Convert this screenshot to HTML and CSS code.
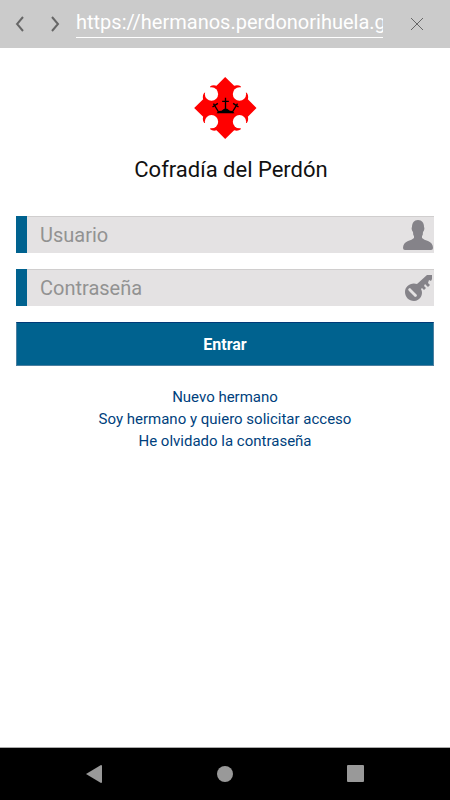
FILE: index.html
```
<!DOCTYPE html>
<html lang="es">
<head>
    <meta charset="UTF-8">
    <meta name="viewport" content="width=device-width, initial-scale=1.0">
    <title>Cofradía del Perdón</title>
    <link rel="stylesheet" href="styles.css">
</head>
<body>
    <header class="browser-bar">
        <button type="button" class="bar-button" aria-label="Atrás">
            <svg width="10" height="16" viewBox="0 0 10 16"><path d="M8 1 L2 8 L8 15"/></svg>
        </button>
        <button type="button" class="bar-button" aria-label="Adelante">
            <svg width="10" height="16" viewBox="0 0 10 16"><path d="M2 1 L8 8 L2 15"/></svg>
        </button>
        <input type="text" class="url" aria-label="Dirección" value="https://hermanos.perdonorihuela.ghermandad.com">
        <button type="button" class="bar-button close" aria-label="Cerrar">
            <svg width="14" height="14" viewBox="0 0 14 14"><path d="M1 1 L13 13 M13 1 L1 13"/></svg>
        </button>
    </header>

    <main class="container">
        <svg class="logo" viewBox="26 22 188 186" aria-hidden="true">
            <path fill="#f00" d="M119 22 L146 48 Q158 45 166 50 Q161 73 184 69 Q190 78 187 89 L213 115 L187 141 Q190 152 184 160 Q161 155 166 179 Q158 185 146 182 L119 208 L93 182 Q82 185 74 179 Q79 155 56 160 Q50 152 53 141 L26 115 L53 89 Q50 78 56 69 Q79 73 74 50 Q82 45 93 48 Z"/>
            <g fill="#fff">
                <circle cx="78" cy="73" r="20"/>
                <circle cx="162" cy="73" r="20"/>
                <circle cx="78" cy="156" r="20"/>
                <circle cx="162" cy="156" r="20"/>
            </g>
            <path fill="none" stroke="#000" stroke-width="4" d="M120 84 V122 M110 95 H130 M84 102 L101 130 M81 112 L97 101 M156 102 L139 130 M143 101 L159 112"/>
            <path d="M93 131 L99 124 L108 123 L116 117 L125 117 L133 123 L141 124 L147 131 Z"/>
        </svg>
        <h1>Cofradía del Perdón</h1>

        <form class="login">
            <div class="field">
                <input type="text" id="usuario" placeholder="Usuario" aria-label="Usuario">
                <svg width="30" height="30" viewBox="0 0 30 30" aria-hidden="true">
                    <path d="M15 0 C19 0 21 3 21 7 C22 8 21 11 20 12 Q20 15 19 16 V18 Q21 20 25 21 Q30 23 30 28 Q30 30 28 30 H2 Q0 30 0 28 Q0 23 5 21 Q9 20 11 18 V16 Q10 15 10 12 C9 11 8 8 9 7 C9 3 11 0 15 0 Z"/>
                </svg>
            </div>
            <div class="field">
                <input type="password" id="contrasena" placeholder="Contraseña" aria-label="Contraseña">
                <svg width="30" height="30" viewBox="0 0 30 30" aria-hidden="true">
                    <path fill-rule="evenodd" d="M24 2 L29 2 V6 L28 8 L26 7 L25 10 L27 12 L25 14 L22 11 L21 13 L23 15 L21 17 L19 15 L18 16 C21 21 17 28 11 28 C6 28 2 24 2 19 C2 13 8 9 14 11 Z M7 15 Q4 16 6 18 L12 24 Q14 24 14 22 Z"/>
                </svg>
            </div>
            <button type="submit" class="submit">Entrar</button>
        </form>

        <nav class="links">
            <a href="#nuevo">Nuevo hermano</a>
            <a href="#acceso">Soy hermano y quiero solicitar acceso</a>
            <a href="#olvido">He olvidado la contraseña</a>
        </nav>
    </main>

    <footer class="system-bar">
        <button type="button" aria-label="Volver">
            <svg width="18" height="18" viewBox="0 0 18 18"><path d="M0 9 L15 0 Q16 0 16 1 V17 Q16 18 15 18 Z"/></svg>
        </button>
        <button type="button" aria-label="Inicio">
            <svg width="18" height="18" viewBox="0 0 18 18"><circle cx="9" cy="9" r="8"/></svg>
        </button>
        <button type="button" aria-label="Recientes">
            <svg width="18" height="18" viewBox="0 0 18 18"><rect x="0" y="0" width="17" height="17" rx="1"/></svg>
        </button>
    </footer>
</body>
</html>
```
FILE: styles.css
```
* {
    box-sizing: border-box;
}

body {
    font-family: Roboto, Arial, sans-serif;
    background-color: #fff;
    color: #111;
    margin: 0;
    min-height: 100vh;
    display: flex;
    flex-direction: column;
}

button {
    font-family: inherit;
    border: none;
    padding: 0;
    cursor: pointer;
}

svg {
    display: block;
}

.browser-bar {
    display: flex;
    align-items: center;
    height: 48px;
    padding: 0 16px 0 2px;
    background-color: #cbcbcb;
}

.bar-button {
    display: flex;
    justify-content: center;
    width: 35px;
    background: none;
}

.bar-button path {
    fill: none;
    stroke: #666;
    stroke-width: 2;
}

.close {
    margin-left: 16px;
}

.bar-button.close path {
    stroke-width: 1;
}

.url {
    flex: 1;
    min-width: 0;
    height: 28px;
    margin-left: 4px;
    padding: 0 0 4px;
    border: none;
    border-bottom: 1px solid #fff;
    background: none;
    color: #fff;
    font-family: inherit;
    font-size: 20px;
    outline: none;
}

.container {
    flex: 1;
    padding: 29px 16px;
}

.logo {
    width: 63px;
    height: 62px;
    margin: 0 auto;
}

h1 {
    margin: 16px 0 32px;
    padding-left: 12px;
    font-size: 22px;
    font-weight: 400;
    line-height: 29px;
    text-align: center;
}

.login {
    display: flex;
    flex-direction: column;
    gap: 16px;
}

.field {
    display: flex;
    align-items: center;
    height: 37px;
    border-left: 11px solid #00628f;
    background-color: #e4e2e3;
    box-shadow: inset 0 1px #d0cece;
}

.field input {
    flex: 1;
    min-width: 0;
    padding: 0 13px;
    border: none;
    background: none;
    font-family: inherit;
    font-size: 20px;
    outline: none;
}

.field input::placeholder {
    color: #929292;
}

.field svg {
    margin-right: 1px;
    fill: #858389;
}

.submit {
    height: 44px;
    border: 1px solid #4b7fa0;
    border-top-color: #003a78;
    background-color: #00628f;
    color: #fff;
    font-size: 16px;
    font-weight: 700;
}

.links {
    display: flex;
    flex-direction: column;
    align-items: center;
    margin-top: 20px;
}

.links a {
    color: #003f7d;
    font-size: 15px;
    line-height: 22px;
    text-decoration: none;
}

.system-bar {
    display: flex;
    align-items: center;
    justify-content: center;
    height: 53px;
    border-top: 1px solid #aaa;
    background-color: #000;
}

.system-bar button {
    display: flex;
    justify-content: center;
    width: 29%;
    background: none;
}

.system-bar svg {
    fill: #999;
}
```
